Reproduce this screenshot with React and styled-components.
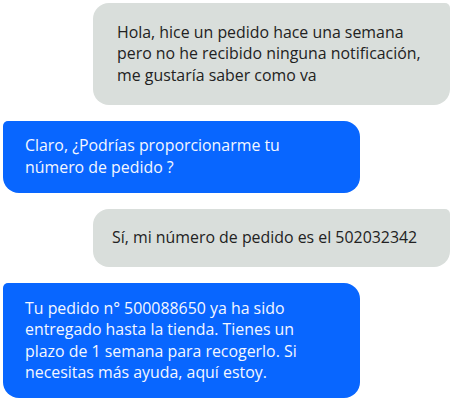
import React from "react";
import styled, { createGlobalStyle } from "styled-components";

const GlobalStyle = createGlobalStyle`
  html, body {
    margin: 0;
    padding: 0;
    background: #ffffff;
  }
  body {
    font-family: "Open Sans", "Noto Sans", sans-serif;
  }
`;

const messages = [
  {
    from: "user",
    text: "Hola, hice un pedido hace una semana pero no he recibido ninguna notificación, me gustaría saber como va",
  },
  {
    from: "agent",
    text: "Claro, ¿Podrías proporcionarme tu número de pedido ?",
  },
  {
    from: "user",
    text: "Sí, mi número de pedido es el 502032342",
    tight: true,
  },
  {
    from: "agent",
    text: "Tu pedido n° 500088650 ya ha sido entregado hasta la tienda. Tienes un plazo de 1 semana para recogerlo. Si necesitas más ayuda, aquí estoy.",
  },
];

const App = () => {
  return (
    <>
      <GlobalStyle />
      <Chat>
        {messages.map((m, i) => (
          <Bubble key={i} $user={m.from === "user"} $tight={m.tight}>
            {m.text}
          </Bubble>
        ))}
      </Chat>
    </>
  );
};

const Chat = styled.div`
  width: 453px;
  box-sizing: border-box;
  padding: 3px 3px;
  display: flex;
  flex-direction: column;
  gap: 16px;
`;

const Bubble = styled.div`
  box-sizing: border-box;
  width: 357px;
  align-self: ${(p) => (p.$user ? "flex-end" : "flex-start")};
  background: ${(p) => (p.$user ? "#d9dedb" : "#0866ff")};
  color: ${(p) => (p.$user ? "#222222" : "#f4f7ff")};
  border-radius: ${(p) => (p.$user ? "16px 5px 16px 16px" : "5px 16px 16px 16px")};
  padding: ${(p) =>
    p.$user
      ? p.$tight
        ? "18.5px 14px 18.5px 19px"
        : "18.5px 12px 18.5px 24px"
      : "14.5px 40px 14.5px 22px"};
  font-size: 15.9px;
  line-height: 21.5px;
`;

export default App;
